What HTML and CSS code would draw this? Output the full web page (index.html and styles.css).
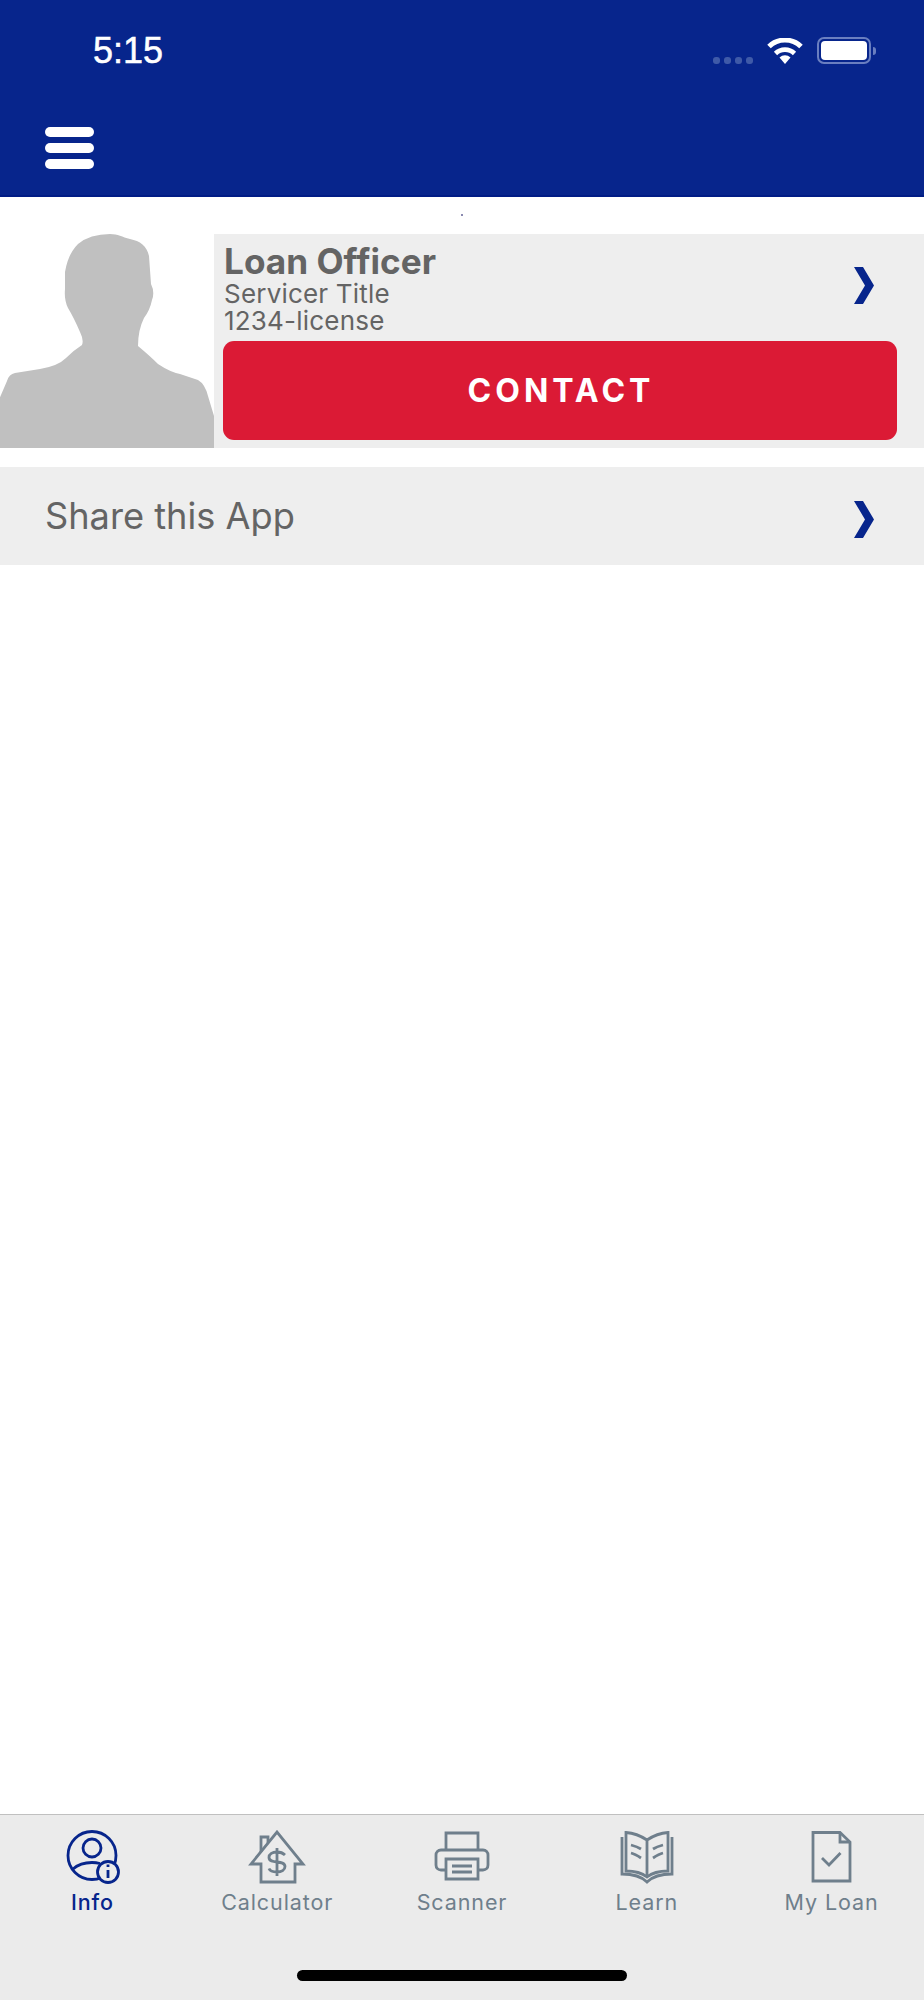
FILE: index.html
```html
<!DOCTYPE html>
<html lang="en">
<head>
    <meta charset="UTF-8">
    <meta name="viewport" content="width=device-width, initial-scale=1.0">
    <title>Info</title>
    <link rel="stylesheet" href="styles.css">
</head>
<body>
    <div class="screen">
        <header class="header">
            <div class="status">
                <span class="time">5:15</span>
                <div class="status-icons">
                    <div class="signal"><i></i><i></i><i></i><i></i></div>
                    <svg class="wifi" viewBox="0 0 36 26">
                        <path d="M18 26l-5.500-6.500a8 8 0 0 1 11 0z" fill="#fff"/>
                        <path d="M8.500 15.500a13.500 13.500 0 0 1 19 0" fill="none" stroke="#fff" stroke-width="4.600"/>
                        <path d="M2 8.500a23 23 0 0 1 32 0" fill="none" stroke="#fff" stroke-width="5"/>
                    </svg>
                    <div class="battery"><span class="battery-fill"></span></div>
                    <span class="battery-nub"></span>
                </div>
            </div>
            <button class="menu"><span></span><span></span><span></span></button>
        </header>

        <main class="main">
            <div class="speck"></div>
            <section class="officer">
                <svg class="avatar" viewBox="0 0 214 214">
                    <path class="silhouette" d="M110 0C118 0 122 3 130 5C140 7 147 12 149 22L151 50Q155 58 152 66Q150 76 144 84Q138 96 138 112Q150 122 158 130Q170 138 180 140L198 146Q205 150 208 162L214 182V220H-5V175L7 147Q9 140 15 139L40 135Q58 132 66 124Q74 116 82 111Q84 106 80 98Q74 84 68 74Q64 66 65 55L65 38Q68 20 78 10Q90 0 110 0Z"/>
                </svg>
                <div class="officer-info">
                    <div class="officer-top">
                        <div class="officer-text">
                            <h1 class="officer-name">Loan Officer</h1>
                            <p class="officer-line">Servicer Title</p>
                            <p class="officer-line">1234-license</p>
                        </div>
                        <svg class="chevron" viewBox="0 0 20 37"><path d="M0 0H9L20 18.500L9 37H0L11 18.500Z"/></svg>
                    </div>
                    <button class="contact">CONTACT</button>
                </div>
            </section>
            <section class="share">
                <span>Share this App</span>
                <svg class="chevron" viewBox="0 0 20 37"><path d="M0 0H9L20 18.500L9 37H0L11 18.500Z"/></svg>
            </section>
        </main>

        <footer class="tabbar">
            <nav class="tabs">
                <a class="tab active">
                    <svg class="tab-icon" viewBox="0 0 60 54">
                        <circle cx="30" cy="25.500" r="24"/>
                        <circle cx="30" cy="18" r="9"/>
                        <path d="M11 39C16 34.500 23 32.500 30 32.500C33 32.500 36 33 38 33.500"/>
                        <circle cx="46" cy="42" r="10.500" fill="#ebebeb"/>
                        <path d="M46 40V48M46 34.500V37"/>
                    </svg>
                    <span>Info</span>
                </a>
                <a class="tab">
                    <svg class="tab-icon" viewBox="0 0 60 54">
                        <path d="M14 52V34H4L30 2L56 34H48V52Z"/>
                        <path d="M14 22V7H21V13"/>
                        <path d="M38 25C36 23 33 22 30 22C25.500 22 22 24 22 27.500C22 35 38 29 38 36.500C38 40 34.500 42 30 42C26 42 23 41 22 38.500M30 18V46"/>
                    </svg>
                    <span>Calculator</span>
                </a>
                <a class="tab">
                    <svg class="tab-icon" viewBox="0 0 60 54">
                        <path d="M14 20V3H46V20"/>
                        <path d="M14 40H9C6 40 4 38 4 35V25C4 22 6 20 9 20H51C54 20 56 22 56 25V35C56 38 54 40 51 40H46"/>
                        <path d="M14 29H46V49H14Z"/>
                        <path d="M20 36H40M20 42H40"/>
                    </svg>
                    <span>Scanner</span>
                </a>
                <a class="tab">
                    <svg class="tab-icon" viewBox="0 0 60 54">
                        <path d="M30 10C24 6 16 3 9 2.500V41C17 41 25 43 30 47C35 43 43 41 51 41V2.500C44 3 36 6 30 10V47"/>
                        <path d="M5 7V44C15 44 24 46 30 52C36 46 45 44 55 44V7"/>
                        <path d="M14 15C18 16 21 17 24 19M14 23C18 24 21 26 24 28M46 15C42 16 39 17 36 19M46 23C42 24 39 26 36 28"/>
                    </svg>
                    <span>Learn</span>
                </a>
                <a class="tab">
                    <svg class="tab-icon" viewBox="0 0 60 54">
                        <path d="M38 2.500H11V51H48V12Z"/>
                        <path d="M38 2.500V12H48"/>
                        <path d="M20 28L27 35L38.500 23"/>
                    </svg>
                    <span>My Loan</span>
                </a>
            </nav>
            <div class="home-bar"></div>
        </footer>
    </div>
</body>
</html>
```

FILE: styles.css
```css
* {
    box-sizing: border-box;
}
body {
    margin: 0;
    font-family: Inter, "Liberation Sans", sans-serif;
    background-color: white;
}
.screen {
    display: flex;
    flex-direction: column;
    width: 924px;
    height: 2000px;
}
.header {
    height: 197px;
    background-color: #07258c;
    border-bottom: 2px solid #001c85;
    flex-shrink: 0;
}
.status {
    display: flex;
    justify-content: space-between;
    align-items: flex-start;
    height: 127px;
    padding: 31px 48px 0 93px;
}
.time {
    font-family: "Liberation Sans", sans-serif;
    font-size: 36px;
    line-height: 40px;
    color: white;
    -webkit-text-stroke: 0.5px white;
}
.status-icons {
    display: flex;
    align-items: center;
    margin-top: 6px;
}
.signal {
    display: flex;
    gap: 4px;
    margin-top: 20px;
    margin-right: 14px;
}
.signal i {
    width: 7px;
    height: 7px;
    border-radius: 3px;
    background-color: #3f5aa8;
}
.wifi {
    width: 36px;
    height: 26px;
    margin-right: 14px;
}
.battery {
    width: 54px;
    height: 27px;
    border: 2px solid #6a7fc0;
    border-radius: 7px;
    padding: 2px;
}
.battery-fill {
    display: block;
    height: 100%;
    background-color: white;
    border-radius: 4px;
}
.battery-nub {
    width: 3px;
    height: 8px;
    margin-left: 2px;
    background-color: #6a7fc0;
    border-radius: 0 3px 3px 0;
}
.menu {
    display: flex;
    flex-direction: column;
    gap: 6px;
    width: 49px;
    margin: 0 0 0 45px;
    padding: 0;
    border: none;
    background: none;
}
.menu span {
    height: 10px;
    border-radius: 5px;
    background-color: white;
}
.main {
    flex: 1;
    padding-top: 17px;
}
.speck {
    width: 2px;
    height: 2px;
    margin: 0 auto 18px;
    background-color: #8a8ab0;
}
.officer {
    display: flex;
    height: 214px;
}
.avatar {
    width: 214px;
    height: 214px;
    flex-shrink: 0;
}
.silhouette {
    fill: #c0c0c0;
    filter: blur(0.7px);
}
.officer-info {
    flex: 1;
    padding: 8px 27px 8px 9px;
    background-color: #eeeeee;
}
.officer-top {
    display: flex;
    justify-content: space-between;
    height: 99px;
}
.officer-text {
    padding-left: 1px;
    color: #646464;
}
.officer-name {
    margin: 0;
    font-size: 35.200px;
    font-weight: 700;
    line-height: 38px;
}
.officer-line {
    margin: 0;
    font-size: 26px;
    line-height: 27px;
    letter-spacing: 0.2px;
}
.chevron {
    width: 20px;
    height: 37px;
    fill: #07258c;
    flex-shrink: 0;
}
.officer-top .chevron {
    margin: 25px 23px 0 0;
}
.contact {
    display: block;
    width: 100%;
    height: 99px;
    padding: 0 0 0 2px;
    border: none;
    border-radius: 11px;
    background-color: #db1a35;
    color: white;
    font-family: Inter, "Liberation Sans", sans-serif;
    font-size: 32px;
    font-weight: 700;
    letter-spacing: 4px;
}
.share {
    display: flex;
    justify-content: space-between;
    align-items: center;
    height: 98px;
    margin-top: 19px;
    padding: 0 50px 0 45px;
    background-color: #eeeeee;
    color: #646464;
    font-size: 36.200px;
}
.share .chevron {
    margin-top: 7px;
}
.tabbar {
    height: 186px;
    flex-shrink: 0;
    padding-top: 15px;
    background-color: #ebebeb;
    border-top: 1px solid #c0c0c0;
}
.tabs {
    display: grid;
    grid-template-columns: repeat(5, 1fr);
}
.tab {
    display: flex;
    flex-direction: column;
    align-items: center;
    color: #6f7f8c;
    font-size: 21.500px;
    letter-spacing: 0.9px;
    line-height: 26px;
}
.tab-icon {
    width: 60px;
    height: 54px;
    margin-bottom: 5px;
    fill: none;
    stroke: #6f7f8c;
    stroke-width: 2.800;
}
.tab.active {
    color: #07258c;
    font-weight: 500;
}
.active .tab-icon {
    stroke: #07258c;
}
.home-bar {
    width: 330px;
    height: 11px;
    margin: 55px auto 0;
    border-radius: 6px;
    background-color: black;
}
```
